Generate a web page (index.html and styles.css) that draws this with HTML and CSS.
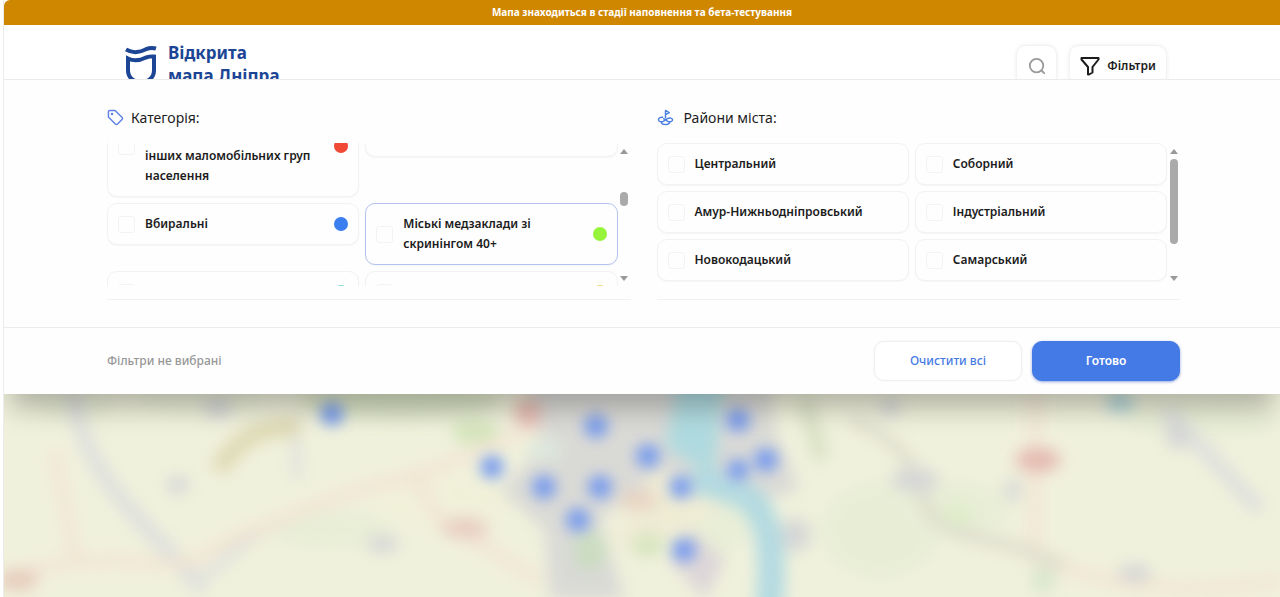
FILE: index.html
```html
<!DOCTYPE html>
<html lang="uk">
<head>
<meta charset="utf-8">
<title>Відкрита мапа Дніпра</title>
<link rel="stylesheet" href="styles.css">
</head>
<body>
<div class="app">
  <div class="banner">Мапа знаходиться в стадії наповнення та бета-тестування</div>
  <header class="header">
    <a class="brand" href="#">
      <svg class="brand-mark" viewBox="0 0 34 42" aria-hidden="true">
        <path d="M2 4.500C10 9 16 7 22 4.200Q27 2 32 3.500" fill="none" stroke="#1c4595" stroke-width="4"/>
        <path d="M4 13.500C11 17 17 15 22 12.500Q27 11 30 11.500V25C30 33 25 36 17 38C9 36 4 33 4 25Z" fill="none" stroke="#1c4595" stroke-width="4"/>
      </svg>
      <span class="brand-name">Відкрита<br>мапа Дніпра</span>
    </a>
    <div class="tools">
      <button class="tool" type="button" aria-label="Пошук">
        <svg class="icon-search" viewBox="0 0 20 20" aria-hidden="true"><circle cx="9.500" cy="9.500" r="7.500"/><path d="M15 15l3 3"/></svg>
      </button>
      <button class="tool tool-wide" type="button">
        <svg class="icon-funnel" viewBox="0 0 20 20" aria-hidden="true"><path d="M1.500 2H18.500V3.500L12.500 11V16.500L9 18.500H8V11L1.500 3.500Z"/></svg>
        Фільтри
      </button>
    </div>
  </header>

  <main class="stage">
    <form class="panel">
      <div class="groups">
        <section class="group">
          <h2 class="group-title">
            <svg class="icon-title" viewBox="0 0 18 18" aria-hidden="true"><path d="M1.500 3Q1.500 1.500 3 1.500H8.500L15.800 8.800Q17 10 15.800 11.200L11.200 15.800Q10 17 8.800 15.800L1.500 8.500Z"/><circle cx="5.300" cy="5.300" r=".6"/></svg>
            Категорія:
          </h2>
          <div class="scroller">
            <div class="viewport">
              <div class="cards scrolled">
                <label class="card card-xl"><input type="checkbox"><span class="name name-end">інших маломобільних груп населення</span><i class="dot red"></i></label>
                <label class="card card-lg"><input type="checkbox"></label>
                <label class="card"><input type="checkbox"><span class="name">Вбиральні</span><i class="dot blue"></i></label>
                <label class="card active"><input type="checkbox"><span class="name">Міські медзаклади зі скринінгом 40+</span><i class="dot green"></i></label>
                <label class="card"><input type="checkbox"><i class="dot teal"></i></label>
                <label class="card"><input type="checkbox"><i class="dot yellow"></i></label>
              </div>
            </div>
            <div class="bar"><i class="up"></i><div class="track"><div class="thumb thumb-small"></div></div><i class="down"></i></div>
          </div>
        </section>

        <section class="group">
          <h2 class="group-title group-title-wide">
            <svg class="icon-title icon-region" viewBox="0 0 18 18" aria-hidden="true"><path d="M9 10V1.500L13 3.800L9 6"/><path d="M6.500 8.800C4 8.300 1.500 9.500 1.500 11.500S4.500 14 6.500 13L11.500 10C13.500 9 16.500 9.500 16.500 11.500S13.500 14 11.500 13L6.500 10M4.500 14C5 17.300 13 17.300 13.500 14"/></svg>
            Райони міста:
          </h2>
          <div class="scroller">
            <div class="viewport">
              <div class="cards">
                <label class="card"><input type="checkbox"><span class="name">Центральний</span></label>
                <label class="card"><input type="checkbox"><span class="name">Соборний</span></label>
                <label class="card"><input type="checkbox"><span class="name">Амур-Нижньодніпровський</span></label>
                <label class="card"><input type="checkbox"><span class="name">Індустріальний</span></label>
                <label class="card"><input type="checkbox"><span class="name">Новокодацький</span></label>
                <label class="card"><input type="checkbox"><span class="name">Самарський</span></label>
              </div>
            </div>
            <div class="bar"><i class="up"></i><div class="track"><div class="thumb thumb-large"></div></div><i class="down"></i></div>
          </div>
        </section>
      </div>
      <div class="footer">
        <p class="status">Фільтри не вибрані</p>
        <button class="btn" type="reset">Очистити всі</button>
        <button class="btn btn-primary" type="button">Готово</button>
      </div>
    </form>

    <div class="map">
      <svg viewBox="4 394 1276 203" preserveAspectRatio="xMidYMid slice" aria-hidden="true">
        <defs>
          <filter id="soft" x="-20%" y="-20%" width="140%" height="140%" color-interpolation-filters="sRGB"><feGaussianBlur stdDeviation="8"/></filter>
          <filter id="pin" x="-20%" y="-20%" width="140%" height="140%" color-interpolation-filters="sRGB"><feGaussianBlur stdDeviation="7"/></filter>
        </defs>
        <rect x="-100" y="294" width="1480" height="403" fill="#f0f1dc"/>
        <g filter="url(#soft)" opacity=".8">
          <g fill="#e2ebd0" opacity=".6">
            <ellipse cx="75" cy="405" rx="35" ry="20"/><ellipse cx="400" cy="400" rx="100" ry="20" fill="#c3d6ae"/><ellipse cx="200" cy="400" rx="60" ry="14"/>
            <ellipse cx="330" cy="530" rx="60" ry="20"/><ellipse cx="700" cy="520" rx="50" ry="40"/><ellipse cx="960" cy="510" rx="50" ry="30"/>
            <ellipse cx="880" cy="530" rx="60" ry="50"/><ellipse cx="1200" cy="420" rx="80" ry="20"/><ellipse cx="440" cy="500" rx="70" ry="30" fill="#f2f0d8"/>
          </g>
          <path d="M530 380H770L775 430L800 490L760 500L730 475L690 510L650 480L600 520L625 600H550L545 530L500 490L540 450Z" fill="#d4d4d5"/>
          <path d="M690 530L725 560L705 600L670 560Z" fill="#d7cfd8"/>
          <path d="M655 470L700 480L730 500L690 530L640 560L610 540Z" fill="#efebd3"/>
          <ellipse cx="590" cy="550" rx="16" ry="20" fill="#c1d8ba"/><ellipse cx="648" cy="545" rx="16" ry="12" fill="#d0e2b9"/>
          <ellipse cx="475" cy="432" rx="24" ry="12" fill="#cde2b4"/><ellipse cx="545" cy="450" rx="18" ry="12" fill="#d9e6dc"/>
          <path d="M704 470V482L742 494C770 510 776 550 768 620" fill="none" stroke="#a3d4e2" stroke-width="27"/>
          <path d="M680 370H726L714 475L665 448Z" fill="#a0d5e0"/>
          <g fill="none" stroke="#d9dadd" stroke-width="15">
            <path d="M72 390C85 480 140 515 203 590"/><path d="M205 578C240 545 260 530 280 520" stroke-width="9"/>
            <path d="M1165 410L1195 440L1260 510"/><path d="M296 415L297 480" stroke-width="9"/>
          </g>
          <g fill="none" stroke="#f3dfd0" stroke-width="10">
            <path d="M-10 585Q60 555 130 562T210 550Q340 490 420 475L540 425"/><path d="M55 450L75 560"/><path d="M1035 390V555"/>
            <path d="M410 470L440 520L540 580"/><path d="M1030 555Q1150 605 1280 580"/>
          </g>
          <path d="M850 420C900 440 915 460 925 505Q940 535 1010 545L1065 565" fill="none" stroke="#d8d6c9" stroke-width="11"/>
          <path d="M218 470C245 430 260 430 300 426" fill="none" stroke="#d9d2a8" stroke-width="18"/>
          <g fill="#cfd0d5"><ellipse cx="915" cy="480" rx="24" ry="12"/><ellipse cx="1178" cy="435" rx="13" ry="15"/><ellipse cx="178" cy="485" rx="12" ry="9"/><ellipse cx="383" cy="544" rx="16" ry="9"/><ellipse cx="1135" cy="573" rx="17" ry="9"/><ellipse cx="1013" cy="490" rx="8" ry="12"/><ellipse cx="218" cy="408" rx="14" ry="11"/><ellipse cx="796" cy="535" rx="15" ry="17"/><ellipse cx="890" cy="408" rx="11" ry="9"/></g>
          <ellipse cx="958" cy="515" rx="18" ry="12" fill="#dcebc6"/><ellipse cx="1043" cy="580" rx="12" ry="14" fill="#d4e4ca"/>
          <path d="M805 400L822 460" stroke="#d2dcbd" stroke-width="16"/>
          <ellipse cx="1120" cy="402" rx="14" ry="10" fill="#9cccd8"/>
          <g fill="#e2aba5"><ellipse cx="1038" cy="460" rx="23" ry="12"/><ellipse cx="18" cy="580" rx="20" ry="10" fill="#e3bfb0"/><ellipse cx="465" cy="528" rx="24" ry="10" fill="#e6c3b9"/><ellipse cx="528" cy="412" rx="14" ry="14"/><ellipse cx="638" cy="500" rx="20" ry="10" fill="#e5cbbb"/></g>
        </g>
        <g filter="url(#pin)" fill="#6c94f0" opacity=".85">
          <circle cx="332" cy="414" r="12"/><circle cx="596" cy="426" r="12"/><circle cx="738" cy="420" r="12"/><circle cx="492" cy="467" r="12"/>
          <circle cx="648" cy="456" r="12"/><circle cx="738" cy="470" r="11"/><circle cx="766" cy="460" r="12"/><circle cx="544" cy="487" r="12"/>
          <circle cx="600" cy="487" r="12"/><circle cx="681" cy="487" r="12"/><circle cx="578" cy="520" r="12"/><circle cx="684" cy="550" r="12"/>
        </g>
      </svg>
    </div>
  </main>
</div>
</body>
</html>
```
FILE: styles.css
```css
* { box-sizing: border-box; }

body {
  margin: 0;
  background: #fff;
  color: #1c1c1c;
  font-family: "Noto Sans", "Open Sans", sans-serif;
  font-size: 12px;
  line-height: 20px;
}

.app {
  display: flex;
  flex-direction: column;
  min-height: 100vh;
  margin-left: 3px;
  border-left: 1px solid #ececec;
}

.banner {
  padding: 2px 12px 3px;
  border-top-left-radius: 6px;
  background: #d08700;
  color: #fff;
  font-size: 10px;
  font-weight: 700;
  text-align: center;
}

.header {
  display: flex;
  justify-content: space-between;
  align-items: flex-start;
  height: 54px;
  padding: 16px 113px 0 120px;
  overflow: hidden;
}

.brand {
  display: flex;
  gap: 10px;
  color: #1c4595;
  text-decoration: none;
}

.brand-mark { width: 34px; height: 42px; margin-top: 4px; }

.brand-name { font-size: 17px; font-weight: 700; line-height: 23px; }

.tools { display: flex; gap: 12px; padding-top: 4px; }

.tool {
  display: flex;
  align-items: center;
  justify-content: center;
  gap: 7px;
  width: 41px;
  height: 41px;
  padding: 0;
  border: 1px solid #f3f3f3;
  border-radius: 10px;
  background: #fff;
  box-shadow: 0 0 4px rgba(0, 0, 0, .07);
  color: #1c1c1c;
  font: 600 12px/20px "Noto Sans", "Open Sans", sans-serif;
}

.tool-wide { width: 98px; }

.icon-search, .icon-funnel {
  width: 20px;
  height: 20px;
  fill: none;
  stroke: #999;
  stroke-width: 2;
  stroke-linecap: round;
}

.icon-search { width: 18px; height: 18px; }
.icon-funnel { stroke: #1c1c1c; stroke-linejoin: round; }

.stage { display: flex; flex: 1; flex-direction: column; overflow: hidden; }

.panel {
  position: relative;
  z-index: 1;
  margin: 0;
  border-top: 1px solid #ebebeb;
  background: #fefefe;
  box-shadow: 0 20px 25px -6px rgba(0, 0, 0, .26);
}

.groups {
  display: grid;
  grid-template-columns: 1fr 1fr;
  gap: 26px;
  padding: 27px 100px 27px 103px;
}

.group { min-width: 0; padding-bottom: 13px; border-bottom: 1px solid #f1f1f1; }

.group-title {
  display: flex;
  align-items: center;
  gap: 7px;
  margin: 0 0 15px;
  font-size: 14px;
  font-weight: 400;
  line-height: 21px;
}

.group-title-wide { gap: 10px; }

.icon-title {
  width: 17px;
  height: 17px;
  fill: none;
  stroke: #5f7fe6;
  stroke-width: 1.5;
  stroke-linejoin: round;
}

.icon-region { stroke: #4a7fe0; }

.scroller { display: flex; height: 143px; }

.viewport { flex: 1; min-width: 0; overflow: hidden; }

.cards {
  display: grid;
  grid-template-columns: 1fr 1fr;
  align-items: start;
  gap: 6px;
}

.scrolled { margin-top: -48px; }

.card {
  display: flex;
  align-items: center;
  gap: 10px;
  min-height: 42px;
  padding: 10px;
  border: 1px solid #f2f2f2;
  border-radius: 10px;
  background: #fefefe;
  box-shadow: 0 1px 2px rgba(0, 0, 0, .04);
}

.card-lg { min-height: 62px; }
.card-xl { min-height: 102px; }
.active { border-color: #b4c3f0; }

.card input {
  flex: none;
  appearance: none;
  width: 17px;
  height: 17px;
  margin: 0;
  border: 1px solid #f3f3f3;
  border-radius: 3px;
}

.name { flex: 1; font-weight: 600; }
.name-end { align-self: flex-end; }

.dot { flex: none; width: 14px; height: 14px; margin-left: auto; border-radius: 50%; }
.red { background: #f04a36; }
.blue { background: #3b7ef0; }
.green { background: #96f53a; }
.teal { background: #7fd8d0; }
.yellow { background: #f2d872; }

.bar {
  display: flex;
  flex-direction: column;
  align-items: center;
  width: 13px;
  padding: 6px 0 5px;
}

.up, .down { border: 4px solid transparent; }
.up { border-top: 0; border-bottom: 5px solid #999; }
.down { border-bottom: 0; border-top: 5px solid #999; }

.track { flex: 1; width: 8px; margin: 5px 0; }
.thumb { border-radius: 4px; background: #aaa; }
.thumb-small { height: 14px; margin-top: 33px; }
.thumb-large { height: 85px; }

.footer {
  display: flex;
  align-items: center;
  gap: 10px;
  padding: 13px 100px 13px 103px;
  border-top: 1px solid #ebebeb;
}

.status { flex: 1; margin: 0; color: #979797; font-weight: 500; }

.btn {
  width: 148px;
  height: 40px;
  border: 1px solid #f0f0f0;
  border-radius: 10px;
  background: #fff;
  box-shadow: 0 0 3px rgba(0, 0, 0, .05);
  color: #477be4;
  font: 500 12px/20px "Noto Sans", "Open Sans", sans-serif;
}

.btn-primary {
  border-color: #447ae6;
  background: #447ae6;
  box-shadow: 0 1px 3px rgba(40, 80, 190, .5);
  color: #fff;
  font-weight: 600;
}

.map {
  display: flex;
  flex: 1 1 200px;
  height: 200px;
  min-height: 200px;
  overflow: hidden;
  background: #eff0db;
}

.map svg { flex: 1; min-width: 0; height: auto; }
```
